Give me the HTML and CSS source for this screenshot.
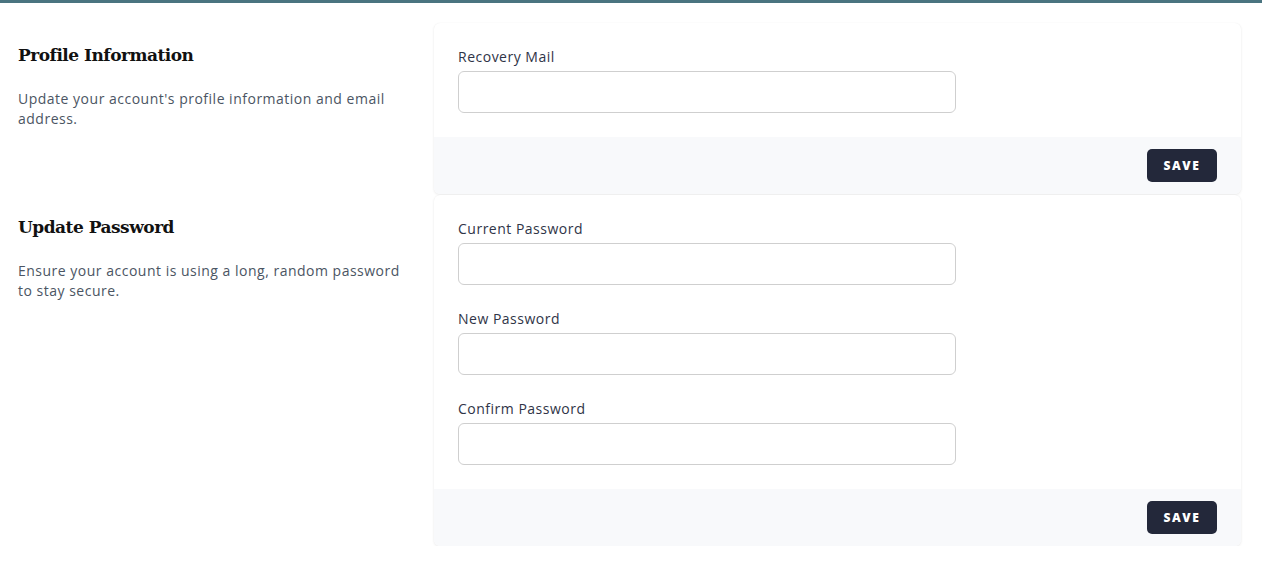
FILE: index.html
```html
<!DOCTYPE html>
<html lang="en">
<head>
<meta charset="utf-8">
<title>Profile</title>
<link rel="stylesheet" href="styles.css">
</head>
<body>
<div class="topbar"></div>
<main class="page">
  <section class="section">
    <div class="intro">
      <h2 class="intro-title">Profile Information</h2>
      <p class="intro-text">Update your account's profile information and email address.</p>
    </div>
    <form class="card">
      <div class="card-body">
        <div class="field">
          <label class="label">Recovery Mail</label>
          <input class="input" type="email">
        </div>
      </div>
      <div class="card-footer">
        <button class="btn" type="button">Save</button>
      </div>
    </form>
  </section>
  <section class="section">
    <div class="intro">
      <h2 class="intro-title">Update Password</h2>
      <p class="intro-text">Ensure your account is using a long, random password to stay secure.</p>
    </div>
    <form class="card">
      <div class="card-body">
        <div class="field">
          <label class="label">Current Password</label>
          <input class="input" type="password">
        </div>
        <div class="field">
          <label class="label">New Password</label>
          <input class="input" type="password">
        </div>
        <div class="field">
          <label class="label">Confirm Password</label>
          <input class="input" type="password">
        </div>
      </div>
      <div class="card-footer">
        <button class="btn" type="button">Save</button>
      </div>
    </form>
  </section>
</main>
</body>
</html>
```

FILE: styles.css
```css
* { box-sizing: border-box; }
html, body { margin: 0; padding: 0; }
body {
  background: #ffffff;
  font-family: "Open Sans", "Liberation Sans", sans-serif;
  color: #374151;
}
.topbar {
  height: 3px;
  background: #4a7480;
}
.page {
  padding: 20px 21px 0 18px;
  display: flex;
  flex-direction: column;
  gap: 1px;
}
.section {
  display: grid;
  grid-template-columns: 392px 1fr;
  column-gap: 24px;
}
.intro {
  padding-top: 18px;
}
.intro-title {
  margin: 0;
  font-family: "DejaVu Serif", "Liberation Serif", serif;
  font-weight: 700;
  font-size: 17px;
  line-height: 28px;
  color: #111111;
  letter-spacing: -0.5px;
}
.intro-text {
  margin: 20px 0 0;
  font-size: 14px;
  line-height: 20px;
  letter-spacing: 0.5px;
  color: #4b5563;
}
.card {
  margin: 0;
  background: #fff;
  border-radius: 6px;
  box-shadow: 0 1px 3px rgba(0,0,0,0.08), 0 0 1px rgba(0,0,0,0.06);
  overflow: hidden;
}
.card-body {
  padding: 24px 24px 24px;
  display: flex;
  flex-direction: column;
  gap: 24px;
}
.field {
  display: flex;
  flex-direction: column;
  gap: 4px;
}
.label {
  font-size: 14px;
  line-height: 20px;
  font-weight: 500;
  letter-spacing: 0.5px;
  color: #2f3447;
}
.input {
  width: 498px;
  height: 42px;
  border: 1px solid #cfcfcf;
  border-radius: 6px;
  background: #fff;
  font: inherit;
}
.card-footer {
  background: #f8f9fb;
  padding: 12px 24px;
  display: flex;
  justify-content: flex-end;
}
.btn {
  width: 70px;
  height: 33px;
  border: 0;
  border-radius: 5px;
  background: #23283a;
  color: #fff;
  font-family: "Open Sans", "Liberation Sans", sans-serif;
  font-weight: 800;
  font-size: 12px;
  letter-spacing: 1.6px;
  text-transform: uppercase;
}
```
